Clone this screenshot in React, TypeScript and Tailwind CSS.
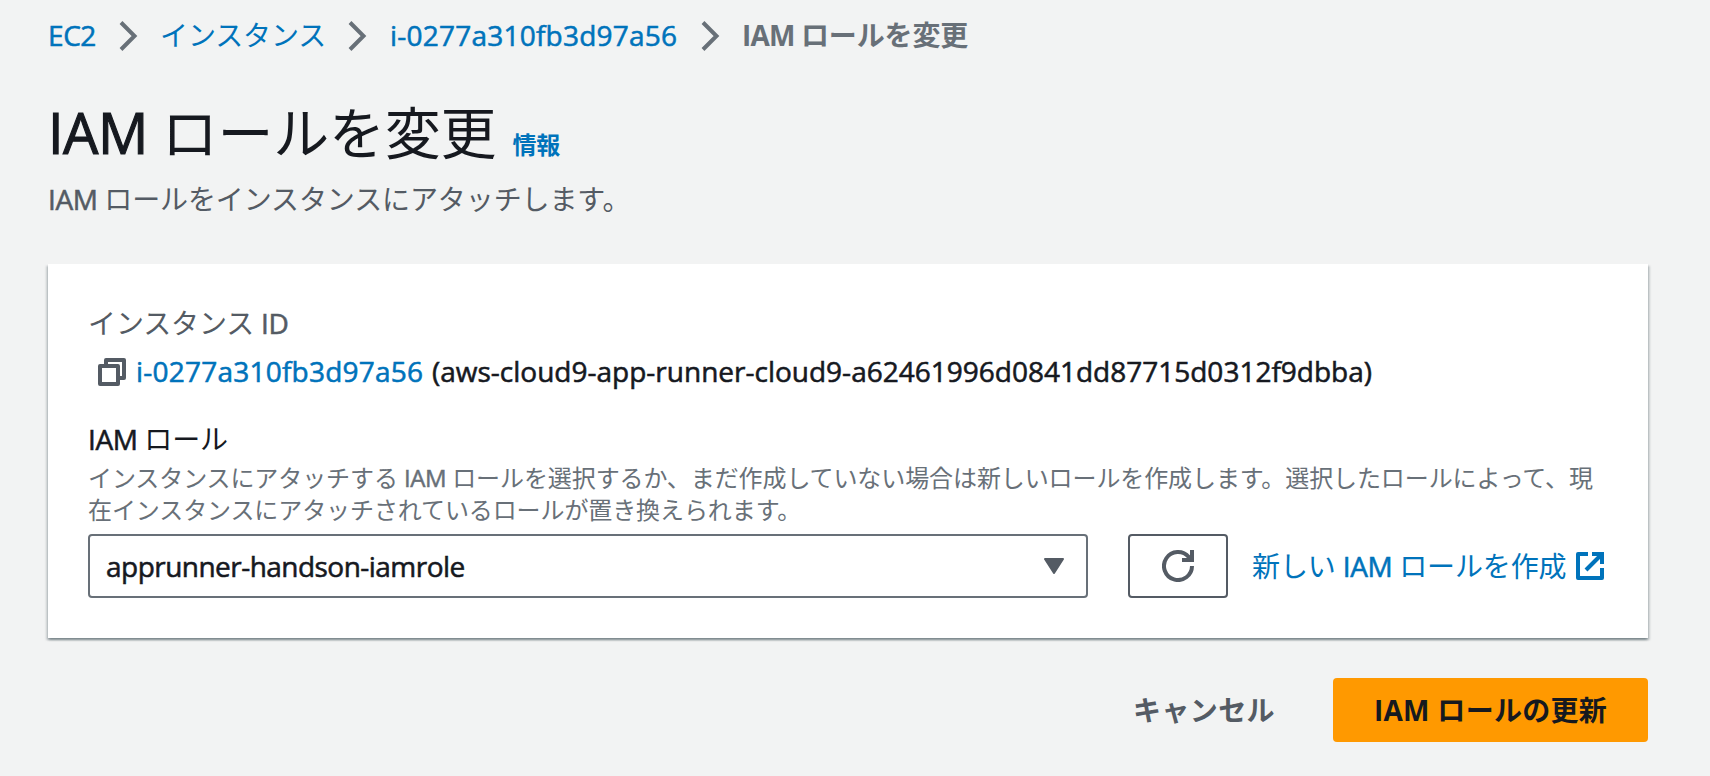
import type { ReactNode } from 'react';

function Chevron() {
  return (
    <svg className="mt-0.5 h-8 w-5 shrink-0 text-[#687078]" viewBox="0 0 20 32" fill="none" stroke="currentColor" strokeWidth="4">
      <path d="M3 2.5 L16.5 16 L3 29.5" />
    </svg>
  );
}

function CopyIcon() {
  return (
    <svg className="mt-0.5 h-7 w-7 shrink-0 text-[#545b64]" viewBox="0 0 28 28" fill="none" stroke="currentColor" strokeWidth="4" strokeLinejoin="round">
      <path d="M2 8h18v18H2z" />
      <path d="M8 8V2h18v18h-6" />
    </svg>
  );
}

function RefreshIcon() {
  return (
    <svg className="h-8 w-8 text-[#545b64]" viewBox="0 0 32 32" fill="none" stroke="currentColor" strokeWidth="4">
      <path d="M30 16a14 14 0 1 1-3.2-8.9L29 10" />
      <path d="M30 0v10H20" />
    </svg>
  );
}

function ExternalIcon() {
  return (
    <svg className="h-7 w-7 shrink-0" viewBox="0 0 28 28" fill="none" stroke="currentColor" strokeWidth="4">
      <path d="M12 2H2v24h24V16" strokeLinejoin="round" />
      <path d="M16 2h10v10" />
      <path d="M26 2L10 18" />
    </svg>
  );
}

function Crumb({ className, children }: { className: string; children: ReactNode }) {
  return <a className={`shrink-0 whitespace-nowrap text-[#0073bb] ${className}`}>{children}</a>;
}

function Iam() {
  return <span className="tracking-[-0.015em] [-webkit-text-stroke:0.02em]">IAM </span>;
}

export default function App() {
  return (
    <div className="h-[776px] w-[1710px] overflow-hidden bg-[#f2f3f3] pt-[15px] pr-[62px] pl-12 font-['Open_Sans','Noto_Sans_CJK_JP',sans-serif] text-[28px] leading-10 tracking-[-0.004em] text-[#16191f]">
      <nav className="flex h-10 items-center">
        <Crumb className="w-[70px] tracking-[-0.015em] [-webkit-text-stroke:0.02em]">EC2</Crumb>
        <Chevron />
        <Crumb className="ml-[22px] w-[187px]">インスタンス</Crumb>
        <Chevron />
        <Crumb className="ml-[23px] w-[310px] tracking-[0.008em] [-webkit-text-stroke:0.02em]">i-0277a310fb3d97a56</Crumb>
        <Chevron />
        <span className="ml-[22px] whitespace-nowrap font-bold text-[#687078]">
          <span className="tracking-[-0.03em]">IAM </span>ロールを変更
        </span>
      </nav>

      <header>
        <h1 className="mt-[37px] flex h-20 items-baseline whitespace-nowrap text-[56px] leading-20 tracking-[-0.004em]">
          <span><span className="tracking-[-0.01em] [-webkit-text-stroke:0.02em]">IAM </span>ロールを変更</span>
          <a className="ml-4 text-2xl leading-8 font-bold text-[#0073bb]">情報</a>
        </h1>
        <p className="mt-[7px] h-10 text-[#545b64]"><Iam />ロールをインスタンスにアタッチします。</p>
      </header>

      <section className="mt-[45px] h-[374px] bg-white px-10 pt-[39px] shadow-[0_2px_2px_0_rgba(0,28,36,0.3),2px_2px_2px_0_rgba(0,28,36,0.15),-2px_2px_2px_0_rgba(0,28,36,0.15)]">
        <div className="h-10 text-[#545b64]">インスタンス<span className="tracking-[-0.015em] [-webkit-text-stroke:0.02em]"> ID</span></div>
        <div className="mt-2 flex h-10 items-center pl-2.5 whitespace-nowrap [-webkit-text-stroke:0.02em]">
          <CopyIcon />
          <a className="ml-2.5 w-[296px] tracking-[0.008em] text-[#0073bb]">i-0277a310fb3d97a56</a>
          <span className="tracking-[0em]">(aws-cloud9-app-runner-cloud9-a62461996d0841dd87715d0312f9dbba)</span>
        </div>
        <div className="mt-7 h-10"><Iam />ロール</div>
        <p className="mt-[3px] text-2xl leading-8 tracking-[-0.004em] whitespace-nowrap text-[#687078]">
          インスタンスにアタッチする <Iam />ロールを選択するか、まだ作成していない場合は新しいロールを作成します。選択したロールによって、現
          <br />
          在インスタンスにアタッチされているロールが置き換えられます。
        </p>
        <div className="mt-2 flex h-16 items-center">
          <div className="flex h-16 w-[1000px] shrink-0 items-center justify-between rounded-sm border-2 border-[#687078] pr-[22px] pl-4">
            <span className="tracking-[-0.019em] [-webkit-text-stroke:0.02em]">apprunner-handson-iamrole</span>
            <svg className="h-4 w-5 text-[#545b64]" viewBox="0 0 20 16" fill="currentColor" stroke="currentColor" strokeWidth="2" strokeLinejoin="round">
              <path d="M1 1h18L10 15z" />
            </svg>
          </div>
          <button className="ml-10 flex h-16 w-[100px] shrink-0 items-center justify-center rounded-sm border-2 border-[#545b64]">
            <RefreshIcon />
          </button>
          <a className="ml-6 flex items-center whitespace-nowrap text-[#0073bb]">
            <span className="w-[324px]">新しい <Iam />ロールを作成</span>
            <ExternalIcon />
          </a>
        </div>
      </section>

      <footer className="mt-10 flex h-16 items-center justify-end font-bold">
        <button className="mr-[58px] tracking-[0.014em] text-[#545b64]">キャンセル</button>
        <button className="h-16 w-[315px] rounded-sm bg-[#ff9900] tracking-[0.01em] whitespace-nowrap">
          IAM ロールの更新
        </button>
      </footer>
    </div>
  );
}
